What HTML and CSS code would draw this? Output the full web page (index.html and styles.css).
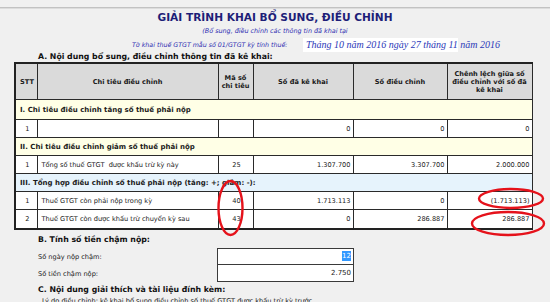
FILE: index.html
```html
<!DOCTYPE html>
<html lang="vi">
<head>
<meta charset="utf-8">
<link rel="stylesheet" href="styles.css">
</head>
<body>
<div class="page">
  <div class="topline"></div>
  <h1 class="title">GIẢI TRÌNH KHAI BỔ SUNG, ĐIỀU CHỈNH</h1>
  <div class="subtitle">(Bổ sung, điều chỉnh các thông tin đã khai tại</div>
  <div class="period">
    <span class="period-label">Tờ khai thuế GTGT mẫu số 01/GTGT kỳ tính thuế:</span>
    <span class="period-box">Tháng 10 năm 2016 ngày 27 tháng 11 năm 2016</span>
  </div>
  <div class="section">A. Nội dung bổ sung, điều chỉnh thông tin đã kê khai:</div>
  <table class="grid">
    <colgroup>
      <col class="c1"><col class="c2"><col class="c3"><col class="c4"><col class="c5"><col class="c6">
    </colgroup>
    <thead>
      <tr class="head">
        <th>STT</th>
        <th>Chi tiêu điều chỉnh</th>
        <th class="tight">Mã số<br>chi tiêu</th>
        <th>Số đã kê khai</th>
        <th>Số điều chỉnh</th>
        <th>Chênh lệch giữa số điều chỉnh với số đã kê khai</th>
      </tr>
    </thead>
    <tbody>
      <tr class="grp yellow r-i"><td colspan="6">I. Chi tiêu điều chỉnh tăng số thuế phải nộp</td></tr>
      <tr class="row r-a"><td class="ctr">1</td><td></td><td></td><td class="num">0</td><td class="num">0</td><td class="num">0</td></tr>
      <tr class="grp yellow"><td colspan="6">II. Chi tiêu điều chỉnh giảm số thuế phải nộp</td></tr>
      <tr class="row"><td class="ctr">1</td><td>Tổng số thuế GTGT &nbsp;được khấu trừ kỳ này</td><td class="ctr">25</td><td class="num">1.307.700</td><td class="num">3.307.700</td><td class="num">2.000.000</td></tr>
      <tr class="grp blue"><td colspan="6">III. Tổng hợp điều chỉnh số thuế phải nộp (tăng: +; giảm: -):</td></tr>
      <tr class="row"><td class="ctr">1</td><td>Thuế GTGT còn phải nộp trong kỳ</td><td class="ctr">40</td><td class="num">1.713.113</td><td class="num">0</td><td class="num">(1.713.113)</td></tr>
      <tr class="row r-last"><td class="ctr">2</td><td>Thuế GTGT còn được khấu trừ chuyển kỳ sau</td><td class="ctr">43</td><td class="num">0</td><td class="num">286.887</td><td class="num">286.887</td></tr>
    </tbody>
  </table>
  <div class="section sec-b">B. Tính số tiền chậm nộp:</div>
  <div class="late">
    <div class="late-row"><span class="late-label">Số ngày nộp chậm:</span><span class="late-box"><span class="sel">12</span></span></div>
    <div class="late-row"><span class="late-label">Số tiền chậm nộp:</span><span class="late-box box2">2.750</span></div>
  </div>
  <div class="section sec-c">C. Nội dung giải thích và tài liệu đính kèm:</div>
  <div class="note">Lý do điều chỉnh: kê khai bổ sung điều chỉnh số thuế GTGT được khấu trừ kỳ trước</div>

  <svg class="marks" width="550" height="302" viewBox="0 0 550 302">
    <ellipse cx="230.5" cy="208" rx="12" ry="27" fill="none" stroke="#e5121b" stroke-width="2.4"/>
    <ellipse cx="511" cy="198.5" rx="32" ry="9.5" fill="none" stroke="#e5121b" stroke-width="2.4"/>
    <ellipse cx="508" cy="223.5" rx="36" ry="11.5" fill="none" stroke="#e5121b" stroke-width="2.4"/>
  </svg>
</div>
</body>
</html>
```
FILE: styles.css
```css
html, body {
  margin: 0;
  padding: 0;
  background: #f0f0f0;
  overflow: hidden;
}
.page {
  position: relative;
  width: 550px;
  height: 302px;
  font-family: "DejaVu Sans", Verdana, sans-serif;
  color: #1a1a1a;
}
.topline {
  height: 7px;
  border-bottom: 1px solid #c2c2c2;
  box-shadow: 0 1px 0 #dcdcdc;
}
.title {
  margin: 3px 0 0;
  text-align: center;
  font-size: 10.6px;
  line-height: 13px;
  font-weight: bold;
  color: #1e1e78;
}
.subtitle {
  margin-top: 2px;
  text-align: center;
  font-size: 6.4px;
  line-height: 10px;
  font-style: italic;
  color: #2b2bb0;
}
.period {
  display: flex;
  align-items: center;
  padding-left: 132px;
  height: 15px;
  margin-top: 1px;
}
.period-label {
  font-size: 6.3px;
  font-style: italic;
  color: #2b2bb0;
  width: 171px;
}
.period-box {
  background: #ffffff;
  width: 152px;
  height: 14px;
  line-height: 14px;
  white-space: nowrap;
  padding-left: 3px;
  font-family: "Liberation Serif", "Times New Roman", serif;
  font-style: italic;
  font-size: 10px;
  color: #2a38b8;
}
.section {
  padding-left: 38px;
  font-weight: bold;
  font-size: 7.8px;
  line-height: 10px;
  color: #111;
}
.grid {
  margin-left: 14px;
  width: 517px;
  border-collapse: collapse;
  table-layout: fixed;
  border: 2px solid #222;
  border-right: 1px solid #888;
  font-size: 6.6px;
}
.c1 { width: 22px; }
.c2 { width: 181px; }
.c3 { width: 35px; }
.c4 { width: 100px; }
.c5 { width: 94px; }
.c6 { width: 85px; }
.grid th, .grid td {
  border: 1px solid #2a2a2a;
  padding: 0 2px;
  overflow: hidden;
  white-space: nowrap;
}
.head th {
  background: #dadada;
  height: 35px;
  font-weight: bold;
  line-height: 8px;
  white-space: normal;
  text-align: center;
  padding: 0 4px;
}
.head th.tight {
  padding: 0;
  white-space: nowrap;
}
.grp td {
  height: 17px;
  font-weight: bold;
  font-size: 7px;
  padding-left: 4px;
}
.r-i td { height: 19px; }
.yellow td { background: #ffffe6; }
.blue td { background: #e6f3fc; }
.row td {
  background: #ffffff;
  height: 17px;
  padding-left: 4px;
}
.r-last td { height: 18px; }
.ctr { text-align: center; }
.row td.num { text-align: right; padding-right: 2px; }
.sec-b { margin-top: 5px; }
.late {
  margin-top: 3px;
  display: flex;
  flex-direction: column;
}
.late-row {
  display: flex;
  align-items: center;
  padding-left: 38px;
  font-size: 6.6px;
}
.late-label {
  width: 179px;
}
.late-box {
  width: 133px;
  height: 15px;
  line-height: 15px;
  background: #fff;
  border: 1px solid #3a3a3a;
  text-align: right;
  padding-right: 2px;
  font-size: 7px;
}
.box2 { border-top: 0; height: 16px; line-height: 16px; }
.sel {
  background: #3399ff;
  color: #fff;
  padding: 1px 0;
}
.sec-c { margin-top: 3px; }
.note {
  padding-left: 42px;
  font-size: 6.6px;
  line-height: 10px;
  margin-top: 1px;
}
.marks {
  position: absolute;
  left: 0;
  top: 0;
  pointer-events: none;
}
```
